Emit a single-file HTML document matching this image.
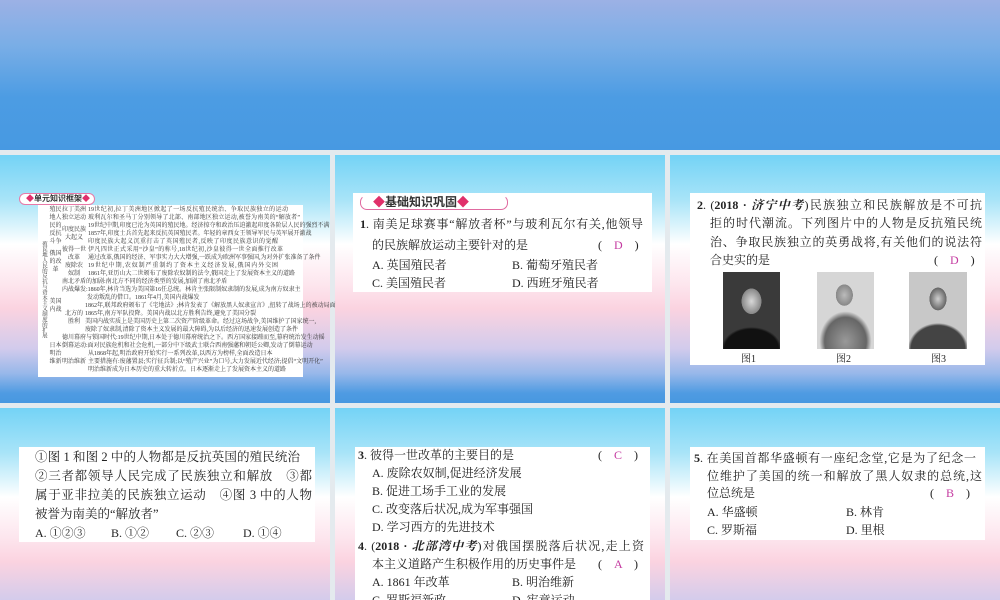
<!DOCTYPE html>
<html><head><meta charset="utf-8"><style>
*{margin:0;padding:0;box-sizing:border-box}
html,body{width:1000px;height:600px;overflow:hidden}
body{background:#e4eaee;position:relative;font-family:"Liberation Serif","Noto Serif CJK SC",serif;color:#222}
.banner{position:absolute;left:0;top:0;width:1000px;height:150px;background:linear-gradient(#9cb1e5 0%,#7aaee6 30%,#4c9ce3 65%,#4799e2 100%)}
.p{position:absolute;width:330px;height:248px;background:linear-gradient(#74d3f6 0%,#a8e4f8 18%,#ffffff 36%,#fde6ee 52%,#fbd3e0 62%,#d2cbec 78%,#98b8ea 88%,#4f9be2 96%,#4898e0 100%);background-size:100% 248px;background-repeat:no-repeat;overflow:hidden}
.r2{height:192px}
.w{position:absolute;background:#fff}
.l{position:absolute;white-space:nowrap;font-size:12px;line-height:16px;text-align:justify;text-align-last:justify}
.n{text-align-last:left}
.ans{color:#c43aa0}
.br{position:absolute;white-space:nowrap;font-size:12px;line-height:16px}
.t{position:absolute;white-space:nowrap;font-size:6px;line-height:8px;text-align:justify;text-align-last:justify;color:#333}
.s{position:absolute;font-size:6px;line-height:8px;color:#333;text-align:center}
.pic{position:absolute;width:57px;height:77px}
.cap{position:absolute;font-size:10px}
</style></head><body>
<div class="banner"></div>
<div class="p" style="left:0;top:155px"></div>
<div class="p" style="left:335px;top:155px"></div>
<div class="p" style="left:670px;top:155px"></div>
<div class="p r2" style="left:0;top:408px"></div>
<div class="p r2" style="left:335px;top:408px"></div>
<div class="p r2" style="left:670px;top:408px"></div>

<!-- Panel 1 -->
<div class="w" style="left:19px;top:193px;width:76px;height:12px;border:1px solid #e87aa8;border-radius:6px;background:#fff"></div>
<div style="position:absolute;left:26px;top:194px;font-size:8px;font-weight:bold;font-family:'Noto Sans CJK SC',sans-serif;color:#333;line-height:10px"><span style="color:#e0306a">◆</span>单元知识框架<span style="color:#e0306a">◆</span></div>
<div class="w" style="left:38px;top:205px;width:265px;height:172px"></div>
<div class="s" style="left:39px;top:240px;width:9px;height:100px;writing-mode:vertical-rl;font-size:5.4px;line-height:9px">殖民地人民的反抗与资本主义制度的扩展</div>
<div class="s" style="left:49px;top:206px;width:13px">殖民<br>地人<br>民的<br>反抗<br>斗争</div>
<div class="s" style="left:49px;top:250px;width:13px">俄国<br>的改<br>革</div>
<div class="s" style="left:49px;top:290px;width:13px"><br>美国<br>内战</div>
<div class="s" style="left:49px;top:342px;width:13px">日本<br>明治<br>维新</div>
<div class="s" style="left:61px;top:206px;width:26px">拉丁美洲<br>独立运动</div>
<div class="s" style="left:61px;top:226px;width:26px">印度民族<br>大起义</div>
<div class="s" style="left:61px;top:246px;width:26px">彼得一世<br>改革</div>
<div class="s" style="left:61px;top:262px;width:26px">废除农<br>奴制</div>
<div class="s" style="left:61px;top:310px;width:26px">北方的<br>胜利</div>
<div class="s" style="left:61px;top:358px;width:26px">明治维新</div>
<div class="t" style="left:88px;top:206px;width:200px">19世纪初,拉丁美洲地区掀起了一场反抗殖民统治、争取民族独立的运动</div>
<div class="t" style="left:88px;top:214px;width:212px">玻利瓦尔和圣马丁分别领导了北部、南部地区独立运动,被誉为南美的“解放者”</div>
<div class="t" style="left:88px;top:222px;width:212px">19世纪中期,印度已沦为英国的殖民地。经济掠夺和政治压迫激起印度各阶层人民的强烈不满</div>
<div class="t" style="left:88px;top:230px;width:212px">1857年,印度士兵首先起来反抗英国殖民者。年轻的章西女王领导军民与英军展开激战</div>
<div class="t" style="left:88px;top:238px;width:190px">印度民族大起义沉重打击了英国殖民者,反映了印度民族意识的觉醒</div>
<div class="t" style="left:88px;top:246px;width:195px">伊凡四世正式采用“沙皇”的称号,18世纪初,沙皇彼得一世全面推行改革</div>
<div class="t" style="left:88px;top:254px;width:212px">通过改革,俄国的经济、军事实力大大增强,一跃成为欧洲军事强国,为对外扩张准备了条件</div>
<div class="t" style="left:88px;top:262px;width:190px">19世纪中期,农奴制严重制约了资本主义经济发展,俄国内外交困</div>
<div class="t" style="left:88px;top:270px;width:192px">1861年,亚历山大二世颁布了废除农奴制的法令,俄国走上了发展资本主义的道路</div>
<div class="t" style="left:62px;top:278px;width:158px">南北矛盾的加剧:南北方不同的经济类型的发展,加剧了南北矛盾</div>
<div class="t" style="left:62px;top:286px;width:226px">内战爆发:1860年,林肯当选为美国第16任总统。林肯主张限制奴隶制的发展,成为南方奴隶主</div>
<div class="t" style="left:87px;top:294px;width:110px">发动叛乱的借口。1861年4月,美国内战爆发</div>
<div class="t" style="left:85px;top:302px;width:215px">1862年,联邦政府颁布了《宅地法》;林肯发表了《解放黑人奴隶宣言》,扭转了战场上的被动局面</div>
<div class="t" style="left:85px;top:310px;width:155px">1865年,南方军队投降。美国内战以北方胜利告终,避免了美国分裂</div>
<div class="t" style="left:85px;top:318px;width:215px">美国内战实质上是美国历史上第二次资产阶级革命。经过这场战争,美国维护了国家统一,</div>
<div class="t" style="left:85px;top:326px;width:208px">废除了奴隶制,清除了资本主义发展的最大障碍,为以后经济的迅速发展创造了条件</div>
<div class="t" style="left:62px;top:334px;width:232px">德川幕府与锁国时代:19世纪中期,日本处于德川幕府统治之下。西方国家接踵而至,幕府统治发生动摇</div>
<div class="t" style="left:62px;top:342px;width:232px">倒幕运动:面对民族危机和社会危机,一部分中下级武士联合西南强藩和朝廷公卿,发动了倒幕运动</div>
<div class="t" style="left:88px;top:350px;width:180px">从1868年起,明治政府开始实行一系列改革,以西方为榜样,全面改造日本</div>
<div class="t" style="left:88px;top:358px;width:212px">主要措施有:废藩置县;实行征兵制;以“殖产兴业”为口号,大力发展近代经济;提倡“文明开化”</div>
<div class="t" style="left:88px;top:366px;width:180px">明治维新成为日本历史的重大转折点。日本逐渐走上了发展资本主义的道路</div>

<!-- Panel 2 -->
<div class="w" style="left:353px;top:193px;width:299px;height:99px"></div>
<div style="position:absolute;left:360px;top:195px;width:148px;height:15px;border:1.5px solid #e06aa0;border-radius:7px;border-top-color:transparent"></div>
<div style="position:absolute;left:373px;top:195px;font-size:12px;font-weight:bold;font-family:'Noto Sans CJK SC',sans-serif;line-height:14px;color:#333"><span style="color:#e0306a">◆</span>基础知识巩固<span style="color:#e0306a">◆</span></div>
<div class="l" style="left:360px;top:216px;width:283px"><b>1</b>. 南美足球赛事“解放者杯”与玻利瓦尔有关,他领导</div>
<div class="l n" style="left:372px;top:237px">的民族解放运动主要针对的是</div>
<div class="br" style="left:598px;top:237px">(　<span class="ans">D</span>　)</div>
<div class="l n" style="left:372px;top:257px">A. 英国殖民者</div>
<div class="l n" style="left:512px;top:257px">B. 葡萄牙殖民者</div>
<div class="l n" style="left:372px;top:275px">C. 美国殖民者</div>
<div class="l n" style="left:512px;top:275px">D. 西班牙殖民者</div>

<!-- Panel 3 -->
<div class="w" style="left:690px;top:193px;width:295px;height:172px"></div>
<div class="l" style="left:697px;top:197px;width:285px"><b>2</b>. (<b>2018 · <i>济宁中考</i></b>)民族独立和民族解放是不可抗</div>
<div class="l" style="left:710px;top:215px;width:272px">拒的时代潮流。下列图片中的人物是反抗殖民统</div>
<div class="l" style="left:710px;top:234px;width:272px">治、争取民族独立的英勇战将,有关他们的说法符</div>
<div class="l n" style="left:710px;top:252px">合史实的是</div>
<div class="br" style="left:934px;top:252px">(　<span class="ans">D</span>　)</div>
<div class="pic" style="left:723px;top:272px;background:radial-gradient(ellipse 14px 18px at 50% 38%,#d8d8d8,#888 70%,transparent 72%),radial-gradient(ellipse 30px 22px at 50% 100%,#111 90%,transparent),#3a3a3a"></div>
<div class="pic" style="left:817px;top:272px;background:radial-gradient(ellipse 12px 15px at 48% 30%,#bbb,#888 70%,transparent 72%),radial-gradient(ellipse 26px 30px at 50% 90%,#999,#666 80%,transparent),#d6d6d6"></div>
<div class="pic" style="left:909px;top:272px;width:58px;background:radial-gradient(ellipse 12px 16px at 50% 35%,#cfcfcf,#666 70%,transparent 72%),radial-gradient(ellipse 30px 26px at 50% 100%,#444 90%,transparent),#c8c8c8"></div>
<div class="cap" style="left:741px;top:350px">图1</div>
<div class="cap" style="left:836px;top:350px">图2</div>
<div class="cap" style="left:931px;top:350px">图3</div>

<!-- Panel 4 -->
<div class="w" style="left:19px;top:447px;width:296px;height:95px"></div>
<div class="l" style="left:35px;top:449px;width:265px;font-size:12.5px">①图 1 和图 2 中的人物都是反抗英国的殖民统治</div>
<div class="l" style="left:35px;top:468px;width:277px;font-size:12.5px">②三者都领导人民完成了民族独立和解放　③都</div>
<div class="l" style="left:35px;top:487px;width:277px;font-size:12.5px">属于亚非拉美的民族独立运动　④图 3 中的人物</div>
<div class="l n" style="left:35px;top:506px;font-size:12.5px">被誉为南美的“解放者”</div>
<div class="l n" style="left:35px;top:525px">A. ①②③</div>
<div class="l n" style="left:111px;top:525px">B. ①②</div>
<div class="l n" style="left:176px;top:525px">C. ②③</div>
<div class="l n" style="left:243px;top:525px">D. ①④</div>

<!-- Panel 5 -->
<div class="w" style="left:355px;top:447px;width:295px;height:153px"></div>
<div class="l n" style="left:358px;top:447px"><b>3</b>. 彼得一世改革的主要目的是</div>
<div class="br" style="left:598px;top:447px">(　<span class="ans">C</span>　)</div>
<div class="l n" style="left:372px;top:465px">A. 废除农奴制,促进经济发展</div>
<div class="l n" style="left:372px;top:483px">B. 促进工场手工业的发展</div>
<div class="l n" style="left:372px;top:501px">C. 改变落后状况,成为军事强国</div>
<div class="l n" style="left:372px;top:519px">D. 学习西方的先进技术</div>
<div class="l" style="left:358px;top:538px;width:286px"><b>4</b>. (<b>2018 · <i>北部湾中考</i></b>)对俄国摆脱落后状况,走上资</div>
<div class="l n" style="left:372px;top:556px">本主义道路产生积极作用的历史事件是</div>
<div class="br" style="left:598px;top:556px">(　<span class="ans">A</span>　)</div>
<div class="l n" style="left:372px;top:574px">A. 1861 年改革</div>
<div class="l n" style="left:512px;top:574px">B. 明治维新</div>
<div class="l n" style="left:372px;top:592px">C. 罗斯福新政</div>
<div class="l n" style="left:512px;top:592px">D. 宪章运动</div>

<!-- Panel 6 -->
<div class="w" style="left:690px;top:447px;width:295px;height:93px"></div>
<div class="l" style="left:694px;top:450px;width:282px"><b>5</b>. 在美国首都华盛顿有一座纪念堂,它是为了纪念一</div>
<div class="l" style="left:707px;top:468px;width:275px">位维护了美国的统一和解放了黑人奴隶的总统,这</div>
<div class="l n" style="left:707px;top:485px">位总统是</div>
<div class="br" style="left:930px;top:485px">(　<span class="ans">B</span>　)</div>
<div class="l n" style="left:707px;top:504px">A. 华盛顿</div>
<div class="l n" style="left:846px;top:504px">B. 林肯</div>
<div class="l n" style="left:707px;top:522px">C. 罗斯福</div>
<div class="l n" style="left:846px;top:522px">D. 里根</div>
</body></html>
